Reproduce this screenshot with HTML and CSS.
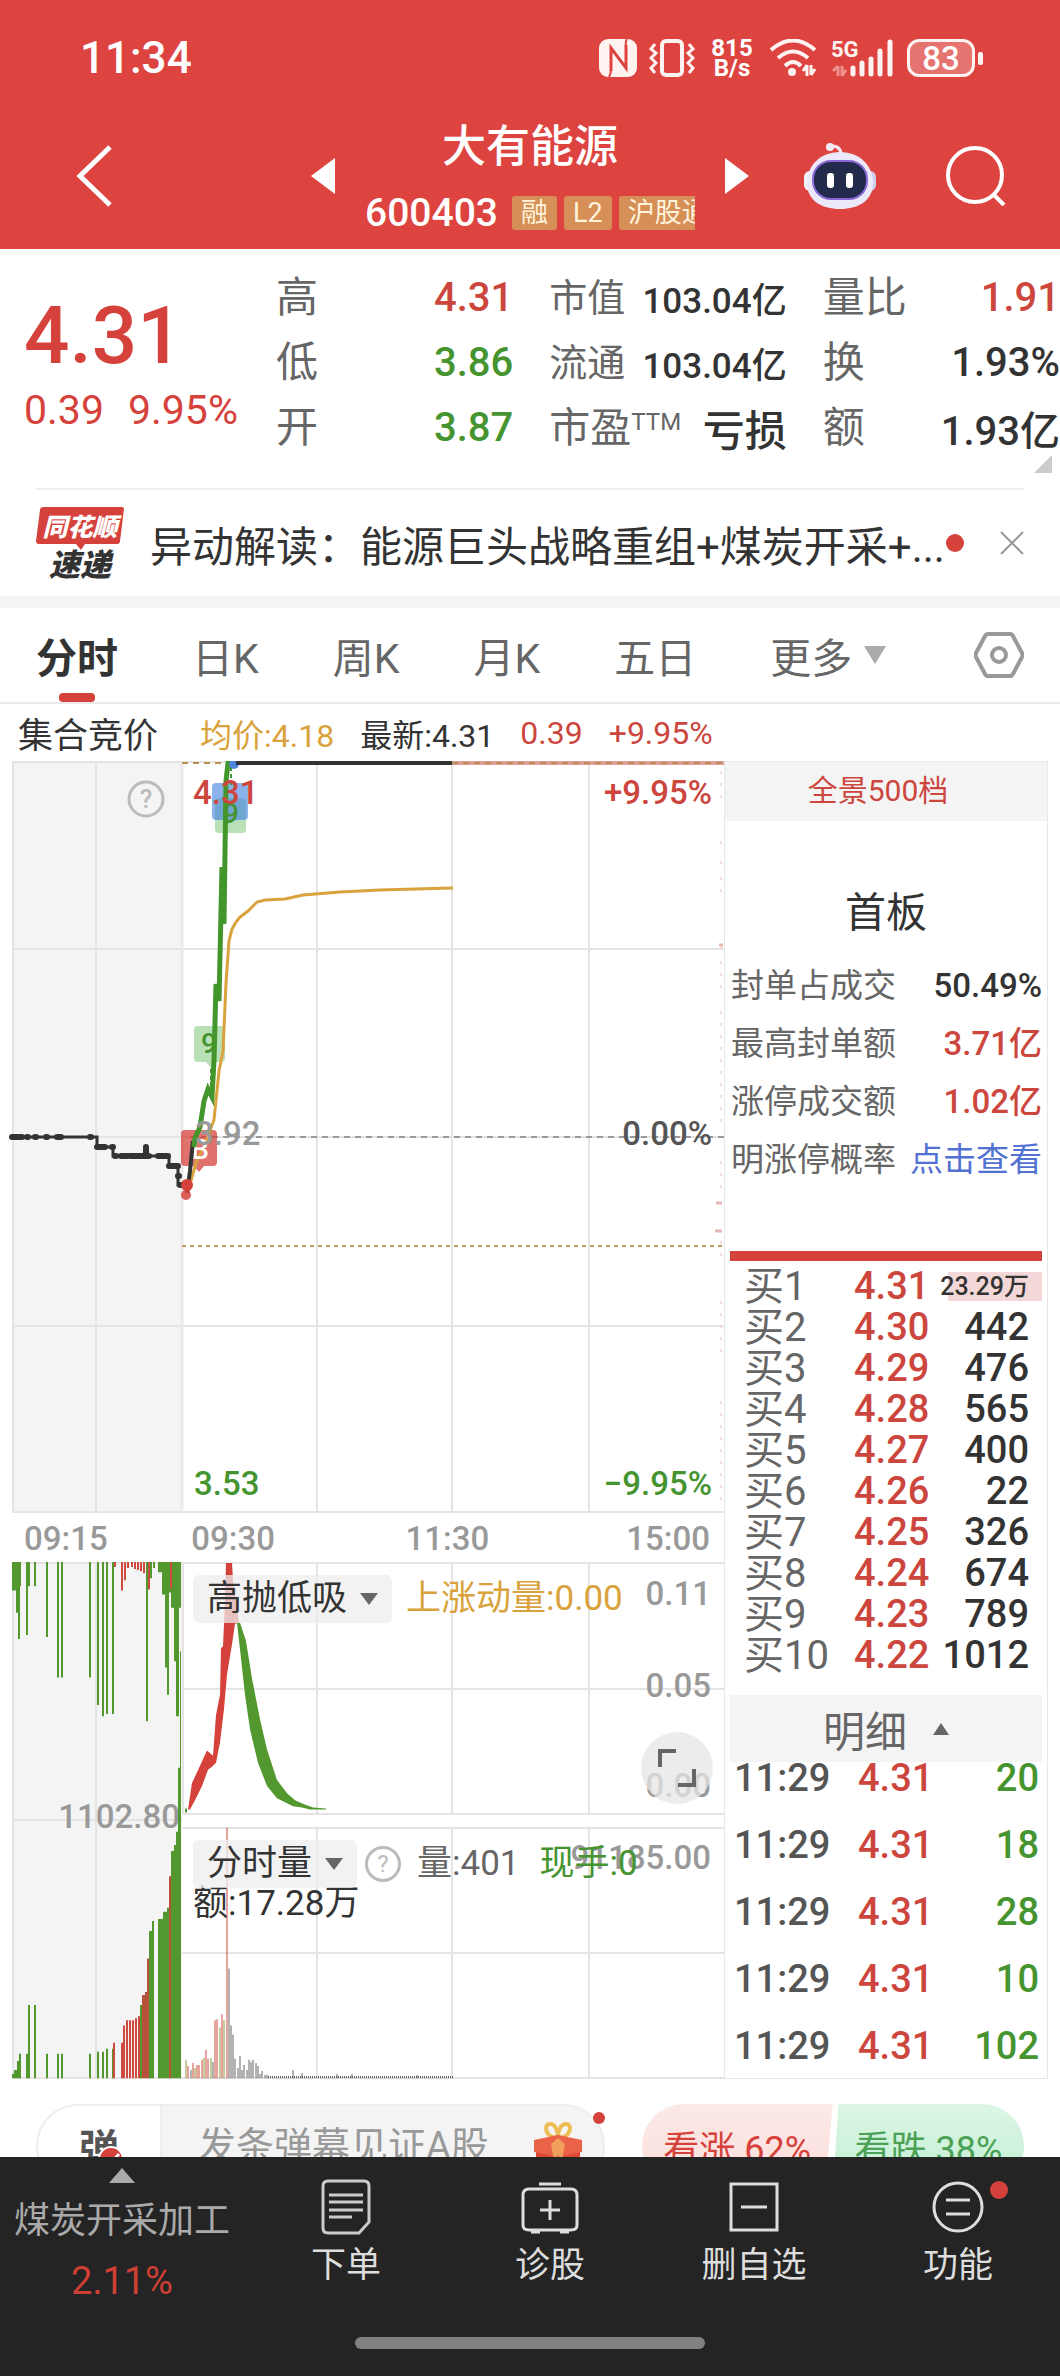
FILE: index.html
```
<!DOCTYPE html>
<html lang="zh-CN">
<head>
  <meta charset="UTF-8" />
  <meta name="viewport" content="width=device-width, initial-scale=1.0"/>
  <title>大有能源 600403</title>
  <link rel="stylesheet" href="styles.css">
</head>
<body>

  <header class="header">

    <div class="status-bar">
      <span class="clock">11:34</span>

      <div class="status-icons">
        <svg width="38" height="38" viewBox="0 0 38 38">
          <rect x="0" y="0" width="38" height="38" rx="9" fill="#fff3f2"/>
          <path d="M12 32V9l15 20V6" fill="none" stroke="#dd4440" stroke-width="3"/>
          <path d="M10 38q2-3 2-8M28 0q-2 3-1 8" fill="none" stroke="#dd4440" stroke-width="2"/>
        </svg>
        <svg width="46" height="38" viewBox="0 0 46 38">
          <rect x="13" y="2" width="20" height="34" rx="4" fill="none" stroke="#fff3f2" stroke-width="4"/>
          <path d="M6 5L2 10l5 4-5 5 5 5-5 5 4 5M40 5l4 5-5 4 5 5-5 5 5 5-4 5" fill="none" stroke="#fff3f2" stroke-width="3"/>
        </svg>
        <div class="net-speed">815<br>B/s</div>
        <svg width="50" height="38" viewBox="0 0 50 38">
          <path d="M2 11Q24-8 46 11M9 19Q24 6 39 19M16 27Q24 19 32 27" fill="none" stroke="#fff3f2" stroke-width="4"/>
          <circle cx="23" cy="33" r="4" fill="#fff3f2"/>
          <path d="M38 26v11M38 26l-4 6M42 36V26M42 36l4-6" fill="none" stroke="#fff3f2" stroke-width="3"/>
        </svg>
        <svg width="64" height="38" viewBox="0 0 64 38">
          <text x="0" y="18" class="net-type">5G</text>
          <path d="M7 27v10M7 27l-5 5M11 37V27M11 37l4-6" fill="none" stroke="#ee908c" stroke-width="3"/>
          <path d="M22 29v6M31 24v11M40 20v15M49 12v23M59 3v32" stroke="#fff3f2" stroke-width="5" stroke-linecap="round"/>
        </svg>
        <div class="battery">83</div>
      </div>
    </div>

    <div class="title-bar">
      <button class="icon-btn" aria-label="返回">
        <svg width="36" height="62" viewBox="0 0 36 62"><path d="M34 2L4 31l30 29" fill="none" stroke="#fff" stroke-width="5"/></svg>
      </button>

      <div class="stock-switch">
        <button class="icon-btn" aria-label="上一只">
          <svg width="24" height="36" viewBox="0 0 24 36"><path d="M24 0v36L0 18z" fill="#fff"/></svg>
        </button>
        <div class="stock-name">
          <h1>大有能源</h1>
          <div class="stock-code">
            <span>600403</span>
            <i class="tag">融</i>
            <i class="tag">L2</i>
            <i class="tag">沪股通</i>
          </div>
        </div>
        <button class="icon-btn" aria-label="下一只">
          <svg width="24" height="36" viewBox="0 0 24 36"><path d="M0 0v36l24-18z" fill="#fff"/></svg>
        </button>
      </div>

      <div class="title-actions">
        <button class="icon-btn" aria-label="智能助手">
          <svg width="72" height="68" viewBox="0 0 72 68">
            <circle cx="26" cy="5" r="4" fill="#f3e9f7"/>
            <path d="M28 4q9 0 9 9" fill="none" stroke="#f3e9f7" stroke-width="3"/>
            <rect x="0" y="29" width="12" height="20" rx="6" fill="#f4f1fb"/>
            <rect x="60" y="29" width="12" height="20" rx="6" fill="#cfcdf0"/>
            <path d="M36 10C56 10 69 24 69 41c0 17-14 26-33 26S3 58 3 41C3 24 16 10 36 10z" fill="#eceafa"/>
            <rect x="9" y="19" width="54" height="38" rx="18" fill="#232b4d" stroke="#8a68d8" stroke-width="2"/>
            <rect x="23" y="31" width="7" height="15" rx="3" fill="#fff"/>
            <rect x="42" y="31" width="7" height="15" rx="3" fill="#fff"/>
          </svg>
        </button>
        <button class="icon-btn" aria-label="搜索">
          <svg width="60" height="60" viewBox="0 0 60 60">
            <circle cx="29" cy="29" r="27" fill="none" stroke="#fff" stroke-width="4"/>
            <path d="M47 48l11 11" stroke="#fff" stroke-width="4"/>
          </svg>
        </button>
      </div>
    </div>

  </header>

  <main>

    <!-- Quote -->
    <section class="quote">
      <div class="price">
        <strong>4.31</strong>
        <div class="change"><span>0.39</span><span>9.95%</span></div>
      </div>
      <dl class="stats">
        <div><dt>高</dt><dd class="up">4.31</dd></div>
        <div class="small"><dt>市值</dt><dd>103.04亿</dd></div>
        <div><dt>量比</dt><dd class="up">1.91</dd></div>
        <div><dt>低</dt><dd class="down">3.86</dd></div>
        <div class="small"><dt>流通</dt><dd>103.04亿</dd></div>
        <div><dt>换</dt><dd>1.93%</dd></div>
        <div><dt>开</dt><dd class="down">3.87</dd></div>
        <div><dt>市盈<sup>TTM</sup></dt><dd>亏损</dd></div>
        <div><dt>额</dt><dd>1.93亿</dd></div>
      </dl>
      <svg class="corner" width="18" height="18" viewBox="0 0 18 18"><path d="M18 0v18H0z" fill="#ccc"/></svg>
    </section>

    <!-- News -->
    <section class="news">
      <svg width="88" height="74" viewBox="0 0 88 74">
        <path d="M8 1h78q2 0 2 2l-4 32q0 3-3 3H49l-4 6-5-6H3q-3 0-3-3L4 4q0-3 4-3z" fill="#d5423b"/>
        <text x="44" y="30" class="logo-top">同花顺</text>
        <text x="44" y="70" class="logo-bottom">速递</text>
      </svg>
      <a href="#">异动解读：能源巨头战略重组+煤炭开采+...</a>
      <i class="dot"></i>
      <button class="icon-btn" aria-label="关闭">
        <svg width="24" height="24" viewBox="0 0 24 24"><path d="M1 1l22 22M23 1L1 23" stroke="#999" stroke-width="2"/></svg>
      </button>
    </section>

    <!-- Period tabs -->
    <nav class="tabs">
      <button class="active">分时</button>
      <button>日K</button>
      <button>周K</button>
      <button>月K</button>
      <button>五日</button>
      <button>更多 <svg width="22" height="18" viewBox="0 0 22 18"><path d="M0 0h22L11 18z" fill="#aaa"/></svg></button>
      <button class="settings" aria-label="设置">
        <svg width="50" height="46" viewBox="0 0 50 46">
          <path d="M14 2h22q2 0 3 2l9 17q1 2 0 4l-9 17q-1 2-3 2H14q-2 0-3-2L2 25q-1-2 0-4l9-17q1-2 3-2z" fill="none" stroke="#999" stroke-width="4"/>
          <circle cx="25" cy="23" r="7" fill="none" stroke="#999" stroke-width="4"/>
        </svg>
      </button>
    </nav>

    <div class="summary">
      <b>集合竞价</b>
      <span class="avg">均价:4.18</span>
      <span>最新:4.31</span>
      <span class="up">0.39</span>
      <span class="up">+9.95%</span>
    </div>

    <section class="board">

      <div class="charts">

        <!-- Price chart -->
        <svg class="chart" viewBox="0 0 724 752">
          <rect x="12" y="0" width="170" height="752" fill="#f4f4f4"/>
          <path class="grid" d="M12 1H724M12 188H724M12 376H724M12 565H724M12 751H724M13 0V752M96 0V752M317 0V752M452 0V752M589 0V752"/>
          <path d="M182 0V752" stroke="#eaeaea" stroke-width="3"/>
          <path d="M721 10v30M721 80v6M721 100v4M721 116v20M721 184v4M721 200v30M721 250v120M721 400v30M721 480v20M721 540v60M721 640v100" stroke="#f4dede" stroke-width="2" stroke-dasharray="3 9"/>
          <path d="M716 442h6M715 470h7M719 184h4" stroke="#e8b5b5" stroke-width="3"/>

          <path d="M452 2H724" stroke="#dd9f98" stroke-width="4"/>
          <path d="M182 2H230M452 2H724" stroke="#b98f55" stroke-width="2" stroke-dasharray="6 5"/>
          <path d="M190 376H724" stroke="#999" stroke-width="2" stroke-dasharray="6 5"/>
          <path d="M182 485H724" stroke="#c39a62" stroke-width="2" stroke-dasharray="4 4"/>

          <!-- Call auction -->
          <path d="M10 376H97V386H113V395H169V405H178V424H181" fill="none" stroke="#333" stroke-width="3"/>
          <path d="M12 376h10M27 376h1M35 376h1M46 376h1M57 376h4M90 376h1M97 386h8M112 386h1M115 395h1M121 395h7M131 395h18M158 395h10M169 405h9M178 415h1M180 424h1M146 386v8" stroke="#333" stroke-width="6" stroke-linecap="round"/>

          <!-- Signal marks -->
          <rect x="215" y="37" width="31" height="35" rx="4" fill="#a9d8a5" fill-opacity=".8"/>
          <rect x="212" y="22" width="36" height="37" rx="4" fill="#3f7fe0" fill-opacity=".6"/>
          <path d="M198 265h23q4 0 4 4v28q0 4-4 4h-5l-5 6-5-6h-8q-4 0-4-4v-28q0-4 4-4z" fill="#a9d8a5" fill-opacity=".8"/>
          <path d="M185 369h28q4 0 4 4v28q0 4-4 4h-9l-5 6-5-6h-9q-4 0-4-4v-28q0-4 4-4z" fill="#d5423b" fill-opacity=".75"/>
          <text x="231" y="62" class="mark down">9</text>
          <text x="209" y="292" class="mark down">9</text>

          <path d="M188 430L196 402 204 385 214 359 219 310 223 290 226 222 229 180 232 168 236 161 240 156 248 150 257 141 265 139 285 138 303 134 340 131 380 129 415 128 453 127" fill="none" stroke="#d9a23c" stroke-width="3"/>
          <text x="200" y="398" class="mark flag">B</text>
          <path d="M187 432L190 410 193 380" fill="none" stroke="#333" stroke-width="4"/>
          <path d="M194 386L195 377 200 366 204 340 208 328 212 336 214 300 216 223 219 240 222 106 224 163 226 20 228 2H233" fill="none" stroke="#43962c" stroke-width="5"/>
          <path d="M211 308V330M231 6V24" stroke="#43962c" stroke-width="2" stroke-dasharray="4 3"/>
          <circle cx="234" cy="3" r="5" fill="#4f86dd"/>
          <path d="M236 2H452" stroke="#333" stroke-width="4"/>
          <circle cx="186" cy="434" r="5" fill="#d5423b" fill-opacity=".85"/>
          <circle cx="187" cy="424" r="6" fill="#d5423b"/>

          <circle cx="146" cy="38" r="17" fill="none" stroke="#bbb" stroke-width="3"/>
          <text x="146" y="47" class="help">?</text>
          <text x="193" y="43" class="up">4.31</text>
          <text x="712" y="43" class="end up">+9.95%</text>
          <text x="195" y="384" class="axis">3.92</text>
          <text x="712" y="384" class="end">0.00%</text>
          <text x="194" y="734" class="down">3.53</text>
          <text x="712" y="734" class="end down">−9.95%</text>
        </svg>

        <div class="times">
          <span>09:15</span>
          <span>09:30</span>
          <span>11:30</span>
          <span>15:00</span>
        </div>

        <!-- Momentum and volume -->
        <div class="sub-charts">
          <svg class="chart" viewBox="0 0 724 517">
            <rect x="12" y="0" width="170" height="516" fill="#f4f4f4"/>
            <path class="grid" d="M12 1H724M182 127H724M182 252H724M182 266H724M182 391H724M12 516H724M12 258H182M13 0V516M96 0V516M183 0V252M317 0V252M452 0V252M589 0V252M317 266V516M452 266V516M589 266V516"/>
            <text x="180" y="266" class="axis end">1102.80</text>

            <g transform="scale(1 1.014)">
              <!-- Auction, unmatched -->
              <path d="M12 0H21V24H20V76H18V50H16V28H12z" fill="#52982f"/>
              <path d="M158 0H181V45H179V152H176V98H174V45H171V30H169V131H167V104H165V32H162V10H158z" fill="#52982f"/>
              <path d="M27 0V72M29 0V24M35 0V24M47 0V74M58 0V114M62 0V114M90 0V114M98 0V141M103 0V152M107 0V150M113 0V150M147 0V157M151 0V16M154 0V6" stroke="#52982f" stroke-width="2"/>
              <path d="M115 0V5M122 0V28M125 0V18M128 0V6M132 0V5M135 0V7M138 0V8M141 0V9M144 0V11M149 0V27M171 0V26" stroke="#cf4a3e" stroke-width="2"/>

              <!-- Auction, matched -->
              <path d="M12 509V505H14V501H17V492H19V485H21V509z" fill="#52982f"/>
              <path d="M27 509V485M29 509V437M35 509V437M47 509V485M58 509V485M62 509V485M90 509V485M98 509V483M103 509V483M107 509V480M113 509V480M141 509V437" stroke="#52982f" stroke-width="2"/>
              <path d="M114 509V474M122 509V474M124 509V457M127 509V452M130 509V452M133 509V452M136 509V450M139 509V448" stroke="#cf4a3e" stroke-width="2"/>
              <path d="M142 509V427H145V424H147V391H149V509z" fill="#b8523c"/>
              <path d="M149 509V364H152V354H154V509zM158 509V352H163V345H167V341H169V509z" fill="#52982f"/>
              <path d="M169 509V310H171V509z" fill="#b8523c"/>
              <path d="M171 509V285H174V279H176V266H178V203H180V88H181V509z" fill="#52982f"/>

              <!-- Momentum -->
              <path d="M188 244L192 218 200 201 207 186 213 191 216 151 220 131 221 85 223 83 225 38 226 1H232L233 18 239 60 235 61 232 81 227 111 224 145 220 178 216 198 212 202 208 205 202 221 195 235 190 244z" fill="#d5423b"/>
              <path d="M237 60H240L246 78 252 115 260 155 267 185 277 215 287 228 295 235 304 239 313 242 326 243V244H310L302 242 293 241 277 233 267 221 258 198 250 165 245 131 241 95z" fill="#52982f"/>
              <path d="M186 243V247" stroke="#52982f" stroke-width="2"/>

              <!-- Volume -->
              <path d="M188 509V497M193 509V494M197 509V496M199 509V496M202 509V491M206 509V481M208 509V490M215 509V452M217 509V451M222 509V446M227 509V262" stroke="#cf4a3e"/>
              <path d="M186 509V491M195 509V499M204 509V489M211 509V489M220 509V459M224 509V452" stroke="#8a9a3c"/>
              <path d="M191 509V501M213 509V493M229 509V401M231 509V457M233 509V466M235 509V490M238 509V499M240 509V487M242 509V501M244 509V496M247 509V501M249 509V491M251 509V493M253 509V491M256 509V494M258 509V497M260 509V505M262 509V502M265 509V506M267 509V506M293 509V501M302 509V504M337 509V505M352 509V505M417 509V506" stroke="#666"/>
              <path d="M268 508H454" stroke="#666" stroke-width="2" stroke-dasharray="1 1"/>
            </g>

            <text x="711" y="43" class="axis end">0.11</text>
            <text x="711" y="135" class="axis end">0.05</text>
            <text x="711" y="235" class="axis end">0.00</text>
            <text x="711" y="307" class="axis end">91185.00</text>
          </svg>

          <div class="sub-head momentum">
            <label class="picker">
              <select aria-label="副图指标"><option>高抛低吸</option></select>
            </label>
            <span class="avg">上涨动量:0.00</span>
          </div>

          <div class="sub-head volume">
            <label class="picker">
              <select aria-label="成交量指标"><option>分时量</option></select>
            </label>
            <button class="help-btn" aria-label="说明">?</button>
            <span class="muted">量:401</span>
            <span class="down">现手:0</span>
            <span class="amount">额:17.28万</span>
          </div>

          <button class="expand" aria-label="全屏">
            <svg width="38" height="38" viewBox="0 0 38 38"><path d="M2 18V2H18M36 20V36H20" fill="none" stroke="#666" stroke-width="4"/></svg>
          </button>
        </div>

      </div>

      <aside class="panel">
        <a class="panel-head" href="#">全景500档</a>
        <h2>首板</h2>
        <ul class="limit">
          <li><span>封单占成交</span><b>50.49%</b></li>
          <li><span>最高封单额</span><b class="up">3.71亿</b></li>
          <li><span>涨停成交额</span><b class="up">1.02亿</b></li>
          <li><span>明涨停概率</span><a href="#">点击查看</a></li>
        </ul>
        <div class="ratio"></div>

        <table class="bids">
          <tr class="first"><th>买1</th><td>4.31</td><td>23.29万</td></tr>
          <tr><th>买2</th><td>4.30</td><td>442</td></tr>
          <tr><th>买3</th><td>4.29</td><td>476</td></tr>
          <tr><th>买4</th><td>4.28</td><td>565</td></tr>
          <tr><th>买5</th><td>4.27</td><td>400</td></tr>
          <tr><th>买6</th><td>4.26</td><td>22</td></tr>
          <tr><th>买7</th><td>4.25</td><td>326</td></tr>
          <tr><th>买8</th><td>4.24</td><td>674</td></tr>
          <tr><th>买9</th><td>4.23</td><td>789</td></tr>
          <tr><th>买10</th><td>4.22</td><td>1012</td></tr>
        </table>

        <button class="detail-head">明细 <svg width="16" height="12" viewBox="0 0 16 12"><path d="M0 12L8 0l8 12z" fill="#666"/></svg></button>

        <table class="deals">
          <tr><td>11:29</td><td>4.31</td><td>20</td></tr>
          <tr><td>11:29</td><td>4.31</td><td>18</td></tr>
          <tr><td>11:29</td><td>4.31</td><td>28</td></tr>
          <tr><td>11:29</td><td>4.31</td><td>10</td></tr>
          <tr><td>11:29</td><td>4.31</td><td>102</td></tr>
        </table>
      </aside>

    </section>

    <!-- Comment strip -->
    <section class="comment">
      <div class="comment-box">
        <button class="danmu" aria-label="弹幕开关">弹
          <svg width="26" height="26" viewBox="0 0 26 26"><circle cx="13" cy="13" r="12" fill="#d5423b" stroke="#fff" stroke-width="2"/><path d="M8 12l5 5 8-9" fill="none" stroke="#fff" stroke-width="3"/></svg>
        </button>
        <input type="text" aria-label="弹幕" placeholder="发条弹幕见证A股">
        <svg width="50" height="64" viewBox="0 0 50 64">
          <path d="M25 16C12 16 10 2 17 2c6 0 8 8 8 14zM25 16C38 16 40 2 33 2c-6 0-8 8-8 14z" fill="none" stroke="#eebc55" stroke-width="4"/>
          <path d="M3 30h44v28q0 4-4 4H7q-4 0-4-4z" fill="#dc4a33"/>
          <path d="M1 18l24-5 24 5v12l-24 5-24-5z" fill="#ea6248"/>
          <path d="M18 22l7-6 7 6-3 16-4-5-4 5z" fill="#f0a05a"/>
        </svg>
        <i class="dot"></i>
      </div>
      <div class="vote">
        <button class="vote-up">看涨 62%</button>
        <button class="vote-down">看跌 38%</button>
      </div>
    </section>

  </main>

  <footer class="footer">
    <div class="toolbar">
      <a class="sector" href="#">
        <svg width="26" height="15" viewBox="0 0 26 15"><path d="M0 15L13 0l13 15z" fill="#aaa"/></svg>
        <span>煤炭开采加工</span>
        <em>2.11%</em>
      </a>
      <button>
        <svg width="50" height="56" viewBox="0 0 50 56"><path d="M7 2h36q5 0 5 5v36L38 54H7q-5 0-5-5V7q0-5 5-5zM8 16h34M8 23h34M8 31h34M8 38h23" fill="none" stroke="#ccc" stroke-width="3"/></svg>
        下单
      </button>
      <button>
        <svg width="58" height="56" viewBox="0 0 58 56"><path d="M18 5h22M8 10h42q6 0 6 6v30q0 5-6 5H8q-6 0-6-5V16q0-6 6-6zM10 53h9M39 53h9M29 21v20M19 31h20" fill="none" stroke="#ddd" stroke-width="3"/></svg>
        诊股
      </button>
      <button>
        <svg width="50" height="56" viewBox="0 0 50 56"><path d="M2 5h46v46H2zM12 28h26" fill="none" stroke="#ddd" stroke-width="3"/></svg>
        删自选
      </button>
      <button>
        <svg width="52" height="56" viewBox="0 0 52 56"><circle cx="26" cy="28" r="24" fill="none" stroke="#ddd" stroke-width="3"/><path d="M14 21h24M14 35h24" stroke="#ddd" stroke-width="3"/></svg>
        功能
        <i class="dot"></i>
      </button>
    </div>
    <div class="home-bar"></div>
  </footer>

</body>
</html>
```
FILE: styles.css
```
* {
  margin: 0;
  padding: 0;
  box-sizing: border-box;
}

body {
  display: flex;
  flex-direction: column;
  height: 100vh;
  font-family: Roboto, "Noto Sans CJK SC", sans-serif;
  background-color: #fff;
  color: #333;
}

button {
  background: none;
  border: none;
  font: inherit;
  color: inherit;
  cursor: pointer;
}

a {
  color: inherit;
  text-decoration: none;
}

svg {
  display: block;
  flex-shrink: 0;
}

i,
em {
  font-style: normal;
}

.up {
  color: #cc463e;
  fill: #cc463e;
}

.down {
  color: #459430;
  fill: #459430;
}

.avg {
  color: #d9a23c;
}

.muted {
  color: #666;
}

.dot {
  width: 18px;
  height: 18px;
  border-radius: 50%;
  background-color: #d5423b;
}

.icon-btn {
  display: flex;
}

/* Header */
.header {
  height: 249px;
  flex-shrink: 0;
  background-color: #dd4440;
  color: #fff;
}

.status-bar {
  display: flex;
  justify-content: space-between;
  align-items: center;
  height: 116px;
  padding: 0 77px 0 80px;
}

.clock {
  font-size: 44px;
  font-weight: 500;
}

.status-icons {
  display: flex;
  align-items: center;
  gap: 12px;
}

.net-speed {
  width: 50px;
  font-size: 24px;
  font-weight: 700;
  line-height: 20px;
  text-align: center;
}

.net-type {
  fill: #fff3f2;
  font-size: 22px;
  font-weight: 700;
}

.battery {
  position: relative;
  width: 68px;
  height: 38px;
  margin-right: 8px;
  border: 3px solid #fff3f2;
  border-radius: 12px;
  background-color: #e5736f;
  font-size: 33px;
  font-weight: 500;
  line-height: 33px;
  text-align: center;
}

.battery::after {
  content: "";
  position: absolute;
  top: 10px;
  right: -11px;
  width: 5px;
  height: 13px;
  border-radius: 2px;
  background-color: #fff3f2;
}

.title-bar {
  display: grid;
  grid-template-columns: 1fr auto 1fr;
  align-items: center;
  height: 120px;
  padding: 0 54px 0 76px;
}

.stock-switch {
  display: flex;
  align-items: center;
  gap: 30px;
  margin-left: -22px;
}

.stock-name {
  width: 330px;
}

.stock-name h1 {
  font-size: 44px;
  font-weight: 500;
  line-height: 62px;
  text-align: center;
}

.stock-code {
  display: flex;
  align-items: center;
  gap: 7px;
  height: 58px;
  padding-top: 12px;
  overflow: hidden;
  font-size: 39px;
  font-weight: 500;
  line-height: 46px;
}

.stock-code span {
  margin-right: 7px;
}

.tag {
  flex-shrink: 0;
  padding: 0 9px;
  border-radius: 3px;
  background-color: #d68f56;
  color: #fff3dc;
  font-size: 27px;
  font-weight: 400;
  line-height: 34px;
}

.title-actions {
  display: flex;
  justify-content: flex-end;
  align-items: center;
  gap: 70px;
}

/* Content */
main {
  display: flex;
  flex-direction: column;
  flex: 1;
  min-height: 0;
}

main > * {
  flex-shrink: 0;
}

.quote {
  position: relative;
  display: flex;
  height: 239px;
  padding-top: 16px;
}

.price {
  width: 276px;
  padding: 22px 0 0 24px;
  color: #d5423b;
}

.price strong {
  display: block;
  font-size: 80px;
  font-weight: 500;
  line-height: 98px;
}

.change {
  display: flex;
  gap: 24px;
  font-size: 41px;
  line-height: 50px;
}

.stats {
  flex: 1;
  display: grid;
  grid-template-columns: repeat(3, 1fr);
  grid-auto-rows: 65px;
  column-gap: 36px;
}

.stats div {
  display: flex;
  justify-content: space-between;
  align-items: center;
}

.stats dt {
  color: #666;
  font-size: 42px;
  line-height: 60px;
}

.stats dd {
  font-size: 40px;
  font-weight: 500;
}

.stats sup {
  font-size: 24px;
  line-height: 24px;
  vertical-align: 12px;
}

.stats .small dt {
  font-size: 38px;
}

.stats .small dd {
  font-size: 35px;
}

.stats div:nth-child(8) dt {
  font-size: 41px;
}

.stats div:nth-child(8) dd {
  font-size: 42px;
}

.corner {
  position: absolute;
  right: 8px;
  bottom: 15px;
}

.news {
  display: flex;
  align-items: center;
  height: 108px;
  margin: 0 36px;
  border-top: 2px solid #eee;
}

.news a {
  flex: 1;
  margin-left: 26px;
  overflow: hidden;
  white-space: nowrap;
  font-size: 42px;
}

.news .dot {
  margin-right: 36px;
}

.logo-top,
.logo-bottom {
  fill: #fff;
  font-size: 25px;
  font-style: italic;
  font-weight: 900;
  text-anchor: middle;
}

.logo-bottom {
  fill: #333;
  font-size: 31px;
}

.tabs {
  display: flex;
  align-items: center;
  gap: 74px;
  height: 108px;
  padding: 0 36px;
  border-top: 12px solid #f4f4f4;
  border-bottom: 2px solid #eaeaea;
  color: #666;
  font-size: 41px;
}

.tabs button {
  position: relative;
  display: flex;
  align-items: center;
  gap: 12px;
  height: 94px;
  white-space: nowrap;
}

.tabs .active {
  color: #333;
  font-weight: 700;
}

.tabs .active::after {
  content: "";
  position: absolute;
  left: 23px;
  bottom: 0;
  width: 36px;
  height: 9px;
  border-radius: 4px;
  background-color: #d5423b;
}

.tabs .settings {
  margin-left: auto;
}

.summary {
  display: flex;
  align-items: center;
  gap: 26px;
  height: 57px;
  padding-left: 18px;
  font-size: 32px;
}

.summary b {
  margin-right: 16px;
  font-size: 35px;
  font-weight: 400;
}

/* Charts */
.board {
  display: grid;
  grid-template-columns: 724fr 336fr;
}

.chart {
  width: 100%;
  height: auto;
  font-size: 33px;
  font-weight: 500;
  fill: #555;
}

.grid {
  fill: none;
  stroke: #e4e4e4;
  stroke-width: 2;
}

.axis {
  fill: #999;
}

.end {
  text-anchor: end;
}

.mark {
  font-size: 28px;
  text-anchor: middle;
}

.flag {
  fill: #fff;
}

.help {
  fill: #bbb;
  font-size: 26px;
  text-anchor: middle;
}

.times {
  display: grid;
  grid-template-columns: 171fr 180fr 180fr 170fr;
  height: 49px;
  padding: 0 14px 0 24px;
  color: #999;
  font-size: 33px;
  font-weight: 500;
  line-height: 52px;
}

.times span:nth-child(3) {
  padding-left: 38px;
}

.times span:nth-child(4) {
  text-align: right;
}

.sub-charts {
  position: relative;
}

.sub-head {
  position: absolute;
  left: 193px;
  display: flex;
  align-items: center;
  font-size: 35px;
  line-height: 48px;
}

.momentum {
  top: 13px;
  gap: 14px;
}

.volume {
  top: 278px;
  width: 470px;
  flex-wrap: wrap;
}

.volume .down {
  margin-left: 20px;
}

.picker {
  position: relative;
}

.picker select {
  appearance: none;
  display: block;
  height: 48px;
  padding: 0 44px 0 14px;
  border: none;
  border-radius: 6px;
  background-color: rgba(238, 238, 238, 0.75);
  color: #333;
  font: inherit;
}

.picker::after {
  content: "";
  position: absolute;
  right: 14px;
  top: 18px;
  border: 9px solid transparent;
  border-top: 12px solid #666;
  border-bottom: none;
}

.help-btn {
  width: 36px;
  height: 36px;
  margin: 0 16px 0 8px;
  border: 3px solid #bbb;
  border-radius: 50%;
  color: #bbb;
  font-size: 24px;
  line-height: 30px;
}

.amount {
  width: 100%;
  margin-top: -8px;
}

.expand {
  position: absolute;
  right: 11px;
  top: 170px;
  display: flex;
  align-items: center;
  justify-content: center;
  width: 72px;
  height: 72px;
  border-radius: 50%;
  background-color: rgba(230, 230, 230, 0.75);
}

/* Order panel */
.panel {
  margin-right: 12px;
  border: 1px solid #e8e8e8;
}

.panel-head {
  display: block;
  height: 59px;
  padding-right: 16px;
  background-color: #f4f4f4;
  color: #cc463e;
  font-size: 30px;
  line-height: 58px;
  text-align: center;
}

.panel h2 {
  height: 136px;
  padding-top: 62px;
  font-size: 41px;
  font-weight: 400;
  line-height: 60px;
  text-align: center;
}

.limit {
  padding: 0 5px 0 6px;
  font-size: 33px;
  line-height: 58px;
  list-style: none;
}

.limit li {
  display: flex;
  justify-content: space-between;
  white-space: nowrap;
}

.limit span {
  color: #666;
}

.limit b {
  font-weight: 500;
}

.limit a {
  color: #5272d3;
}

.ratio {
  height: 10px;
  margin: 62px 5px 5px;
  background-color: #d5423b;
}

.bids,
.deals {
  width: calc(100% - 10px);
  margin: 0 5px;
  border-collapse: collapse;
  font-size: 38px;
  font-weight: 500;
}

.bids tr {
  height: 41px;
  line-height: 41px;
}

.bids th {
  width: 124px;
  padding-left: 14px;
  color: #666;
  font-size: 40px;
  font-weight: 400;
  text-align: left;
}

.bids td:nth-child(2) {
  color: #cc463e;
}

.bids td:nth-child(3) {
  padding-right: 13px;
  text-align: right;
}

.bids .first td:nth-child(3) {
  background: linear-gradient(#f4d8d8, #f4d8d8) right center / 94px 29px no-repeat;
  font-size: 25px;
}

.detail-head {
  display: flex;
  align-items: center;
  justify-content: center;
  gap: 26px;
  width: calc(100% - 10px);
  height: 67px;
  margin: 19px 5px 0;
  background-color: #f4f4f4;
  color: #666;
  font-size: 42px;
}

.deals td {
  height: 67px;
  padding: 0 3px 0 4px;
  line-height: 32px;
  vertical-align: top;
  color: #555;
}

.deals tr:last-child td {
  height: 44px;
}

.deals td:nth-child(1) {
  width: 124px;
}

.deals td:nth-child(2) {
  color: #cc463e;
}

.deals td:nth-child(3) {
  color: #459430;
  text-align: right;
}

/* Comment strip */
.comment {
  display: flex;
  flex: 1;
  align-items: flex-start;
  gap: 37px;
  min-height: 0;
  padding: 25px 36px 0;
  overflow: hidden;
}

.comment-box {
  position: relative;
  flex: 567;
  display: flex;
  align-items: center;
  min-width: 0;
  height: 84px;
  border: 2px solid #eee;
  border-radius: 42px;
  background-color: #f4f4f4;
}

.danmu {
  position: relative;
  width: 124px;
  height: 80px;
  flex-shrink: 0;
  border-right: 2px solid #eee;
  border-radius: 40px 0 0 40px;
  background-color: #fff;
  color: #555;
  font-size: 40px;
  font-weight: 700;
}

.danmu svg {
  position: absolute;
  left: 60px;
  top: 40px;
}

.comment-box input {
  flex: 1;
  width: 0;
  min-width: 0;
  padding-left: 36px;
  border: none;
  background: none;
  font: inherit;
  font-size: 38px;
}

.comment-box input::placeholder {
  color: #999;
}

.comment-box > svg {
  margin: 16px 20px 0 0;
}

.comment-box .dot {
  position: absolute;
  top: 6px;
  right: -2px;
  width: 12px;
  height: 12px;
}

.vote {
  flex: 384;
  display: flex;
  min-width: 0;
  height: 84px;
  border-radius: 42px;
  overflow: hidden;
  font-size: 36px;
}

.vote button {
  flex: 1;
  white-space: nowrap;
}

.vote-up {
  background: linear-gradient(#fbe9e7, #fcdedb);
  clip-path: polygon(0 0, 100% 0, 96% 100%, 0 100%);
  color: #d5423b;
}

.vote-down {
  background: linear-gradient(#dcf6e5, #c2efd3);
  clip-path: polygon(3% 0, 100% 0, 100% 100%, 0 100%);
  color: #4ba156;
}

/* Bottom bar */
.footer {
  flex-shrink: 0;
  height: 219px;
  background-color: #242424;
  color: #ddd;
}

.toolbar {
  display: grid;
  grid-template-columns: 244fr repeat(4, 204fr);
  height: 180px;
  font-size: 35px;
}

.toolbar button {
  position: relative;
  display: flex;
  flex-direction: column;
  align-items: center;
  padding-top: 22px;
  line-height: 62px;
}

.toolbar .dot {
  position: absolute;
  left: 134px;
  top: 24px;
}

.sector {
  display: flex;
  flex-direction: column;
  align-items: center;
  padding-top: 11px;
  color: #aaa;
  font-size: 36px;
  line-height: 60px;
}

.sector span {
  margin-top: 8px;
  white-space: nowrap;
}

.sector em {
  color: #cf4034;
  font-size: 38px;
}

.home-bar {
  width: 33%;
  height: 12px;
  margin: 0 auto;
  border-radius: 6px;
  background-color: #808080;
}
```
